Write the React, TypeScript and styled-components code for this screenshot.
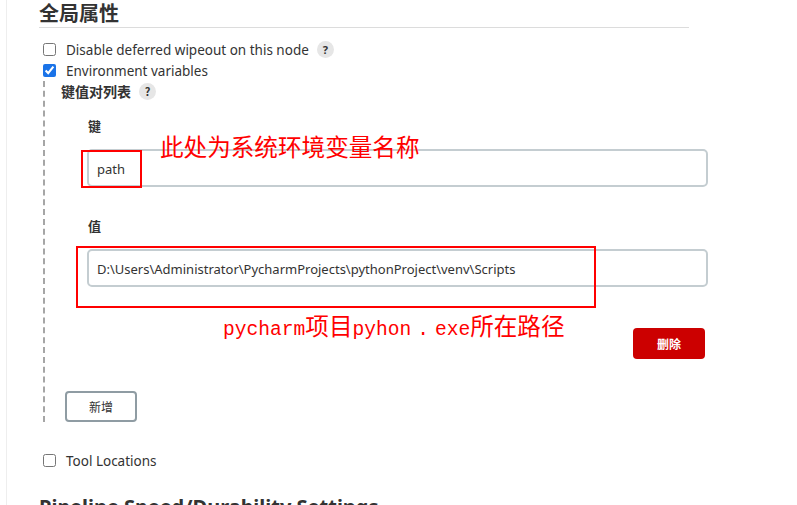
import React from "react";
import styled, { createGlobalStyle } from "styled-components";

const Global = createGlobalStyle`
  html, body { margin: 0; padding: 0; background: #fff; }
  body {
    font-family: "Noto Sans", "Noto Sans CJK SC", sans-serif;
    color: #333;
    overflow: hidden;
  }
`;

const Page = styled.div`
  margin-left: 6px;
  border-left: 1px solid #eeeeee;
  padding-left: 32px;
  height: 505px;
  width: 680px;
  overflow: hidden;
`;

const SectionTitle = styled.h2<{ $underline?: boolean }>`
  margin: 0;
  width: 650px;
  font-size: 20px;
  font-weight: 700;
  line-height: 24px;
  color: #333;
  font-family: "Noto Sans", "Noto Sans CJK SC", sans-serif;
  padding-top: 2px;
  padding-bottom: 1px;
  border-bottom: ${(p) => (p.$underline ? "1px solid #dcdcdc" : "none")};
`;

const Options = styled.div`
  padding-top: 11px;
  padding-left: 4px;
  display: flex;
  flex-direction: column;
`;

const CheckRow = styled.label`
  display: flex;
  align-items: center;
  height: 21px;
  font-size: 13.5px;
  color: #333;
`;

const Box = styled.input`
  margin: 0 10px 0 0;
  width: 13px;
  height: 13px;
  accent-color: #1a73e8;
`;

const Help = styled.span`
  display: inline-flex;
  align-items: center;
  justify-content: center;
  width: 17px;
  height: 17px;
  border-radius: 50%;
  background: #e6e6e6;
  color: #333;
  font-size: 11px;
  font-weight: 700;
  margin-left: 8px;
`;

const Nested = styled.div`
  border-left: 2px dashed #a6a6a6;
  margin-bottom: 28px;
  padding-left: 16px;
  width: 647px;
`;

const ListLabel = styled.div`
  display: flex;
  align-items: center;
  height: 20px;
  font-size: 14px;
  font-weight: 600;
  font-family: "Noto Sans CJK SC", sans-serif;
`;

const Entry = styled.div`
  position: relative;
  padding-left: 26px;
  padding-top: 15px;
  display: flex;
  flex-direction: column;
`;

const FieldLabel = styled.div`
  font-size: 13px;
  font-weight: 700;
  height: 20px;
  line-height: 20px;
  font-family: "Noto Sans CJK SC", sans-serif;
  color: #333;
  margin-left: 1px;
`;

const Input = styled.div<{ $mb: number }>`
  margin-top: 13px;
  margin-bottom: ${(p) => p.$mb}px;
  height: 32px;
  border: 2px solid #c4cdd1;
  border-radius: 5px;
  display: flex;
  align-items: center;
  padding-left: 8px;
  padding-top: 2px;
  font-size: 13px;
  color: #333;
  white-space: nowrap;
`;

const Actions = styled.div`
  display: flex;
  justify-content: flex-end;
  padding-right: 3px;
  margin-top: 41px;
`;

const DangerButton = styled.button`
  width: 72px;
  height: 31px;
  background: #cc0000;
  color: #fff;
  border: none;
  border-radius: 4px;
  font-size: 12px;
  font-weight: 700;
  font-family: "Noto Sans CJK SC", sans-serif;
`;

const AddButton = styled.button`
  margin-top: 32px;
  margin-left: 4px;
  width: 72px;
  height: 31px;
  background: #fff;
  border: 2px solid #8f9ca3;
  border-radius: 4px;
  font-size: 12px;
  color: #333;
  font-family: "Noto Sans CJK SC", sans-serif;
`;

const RedBox = styled.div<{ $x: number; $y: number; $w: number; $h: number }>`
  position: absolute;
  left: ${(p) => p.$x}px;
  top: ${(p) => p.$y}px;
  width: ${(p) => p.$w}px;
  height: ${(p) => p.$h}px;
  border: 2px solid #ff0000;
  box-sizing: border-box;
  pointer-events: none;
`;

const Note = styled.div<{ $x: number; $y: number }>`
  position: absolute;
  left: ${(p) => p.$x}px;
  top: ${(p) => p.$y}px;
  color: #ff0000;
  font-size: 23.6px;
  line-height: 28px;
  font-weight: 400;
  font-family: "Noto Sans CJK SC", serif;
  white-space: nowrap;
  display: flex;
  align-items: baseline;
`;

const Latin = styled.span`
  font-family: "Liberation Mono", monospace;
  font-size: 19.6px;
`;

const Dot = styled(Latin)`
  display: inline-block;
  width: 23.6px;
  text-align: center;
`;

const NextTitle = styled(SectionTitle)`
  margin-top: 22px;
  width: auto;
`;

export default function App() {
  return (
    <>
      <Global />
      <Page>
        <SectionTitle $underline>全局属性</SectionTitle>
        <Options>
          <CheckRow>
            <Box type="checkbox" readOnly />
            Disable deferred wipeout on this node
            <Help>?</Help>
          </CheckRow>
          <CheckRow>
            <Box type="checkbox" defaultChecked />
            Environment variables
          </CheckRow>
          <Nested>
            <ListLabel>
              键值对列表<Help>?</Help>
            </ListLabel>
            <Entry>
              <FieldLabel>键</FieldLabel>
              <Input $mb={29}>path</Input>
              <FieldLabel>值</FieldLabel>
              <Input $mb={0}>
                D:\Users\Administrator\PycharmProjects\pythonProject\venv\Scripts
              </Input>
              <Actions>
                <DangerButton>删除</DangerButton>
              </Actions>
              <RedBox $x={20} $y={49} $w={61} $h={38} />
              <RedBox $x={15} $y={145} $w={520} $h={62} />
              <Note $x={99} $y={31}>此处为系统环境变量名称</Note>
              <Note $x={162} $y={210}>
                <Latin>pycharm</Latin>项目<Latin>pyhon</Latin>
                <Dot>.</Dot>
                <Latin>exe</Latin>所在路径
              </Note>
            </Entry>
            <AddButton>新增</AddButton>
          </Nested>
          <CheckRow>
            <Box type="checkbox" readOnly />
            Tool Locations
          </CheckRow>
        </Options>
        <NextTitle>Pipeline Speed/Durability Settings</NextTitle>
      </Page>
    </>
  );
}
